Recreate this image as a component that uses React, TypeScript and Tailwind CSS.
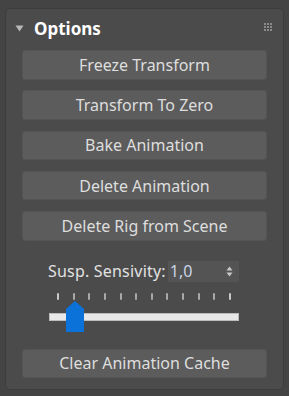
import React from "react";

const BUTTONS = [
  "Freeze Transform",
  "Transform To Zero",
  "Bake Animation",
  "Delete Animation",
  "Delete Rig from Scene",
];

function Button({ label }: { label: string }) {
  return (
    <button className="h-[29.5px] w-full rounded-[3px] bg-[#5c5c5c] border border-[#545454] text-[16px] text-[#dedede] leading-none">
      {label}
    </button>
  );
}

export default function App() {
  const ticks = Array.from({ length: 12 });
  return (
    <div
      className="w-[289px] h-[396px] bg-[#444444] pt-[8px] px-[5px]"
      style={{ fontFamily: '"Noto Sans", "Open Sans", sans-serif' }}
    >
      <div className="h-[382px] rounded-[5px] bg-[#4b4b4b] border border-[#3d3d3d] px-[16px]">
        {/* Header */}
        <div className="h-[41px] flex items-center">
          <svg width="9" height="7" viewBox="0 0 9 7" className="ml-[-7px] mr-[10px] mt-[-2px]">
            <path d="M0.5 0.5 H8.5 L4.5 6.5 Z" fill="#b8b8b8" />
          </svg>
          <span className="text-[17px] font-bold text-white leading-none mt-[-2px]">Options</span>
          <div className="ml-auto mr-[-5px] mt-[-6px] grid grid-cols-3 gap-[1px]">
            {Array.from({ length: 9 }).map((_, i) => (
              <div key={i} className="w-[2px] h-[2px] bg-[#8a8a8a]" />
            ))}
          </div>
        </div>

        {/* Buttons */}
        <div className="flex flex-col gap-[10.8px]">
          {BUTTONS.map((b) => (
            <Button key={b} label={b} />
          ))}
        </div>

        {/* Spinner */}
        <div className="mt-[20px] flex items-center pl-[26px]">
          <span className="text-[16px] text-[#e2e2e2] leading-none tracking-[0.2px]">Susp. Sensivity:</span>
          <div className="ml-[2px] w-[71px] h-[21px] bg-[#545454] flex items-center pl-[2px] pr-[6px]">
            <span className="text-[16px] text-[#c9d3e6] leading-none">1,0</span>
            <svg width="7" height="11" viewBox="0 0 7 11" className="ml-auto">
              <path d="M0.5 4.5 L3.5 0.5 L6.5 4.5 Z" fill="#c8c8c8" />
              <path d="M0.5 6.5 L3.5 10.5 L6.5 6.5 Z" fill="#c8c8c8" />
            </svg>
          </div>
        </div>

        {/* Slider */}
        <div className="mt-[11px] ml-[27px] w-[190px]">
          <div className="flex justify-between px-[8px] h-[8px]">
            {ticks.map((_, i) => (
              <div key={i} className={`w-[2px] h-[7px] rounded-[1px] ${i === 0 || i === 11 ? "bg-[#c8c8c8]" : "bg-[#a8a8a8]"}`} />
            ))}
          </div>
          <div className="relative mt-[12px] h-[8px] bg-[#e8e8e8] border border-[#bdbdbd]">
            <svg
              width="18"
              height="31"
              viewBox="0 0 18 31"
              className="absolute left-[16px] top-[-13px]"
            >
              <path d="M0 8 L9 0 L18 8 V31 H0 Z" fill="#0a72d8" />
            </svg>
          </div>
        </div>

        {/* Clear */}
        <div className="mt-[28px]">
          <Button label="Clear Animation Cache" />
        </div>
      </div>
    </div>
  );
}
